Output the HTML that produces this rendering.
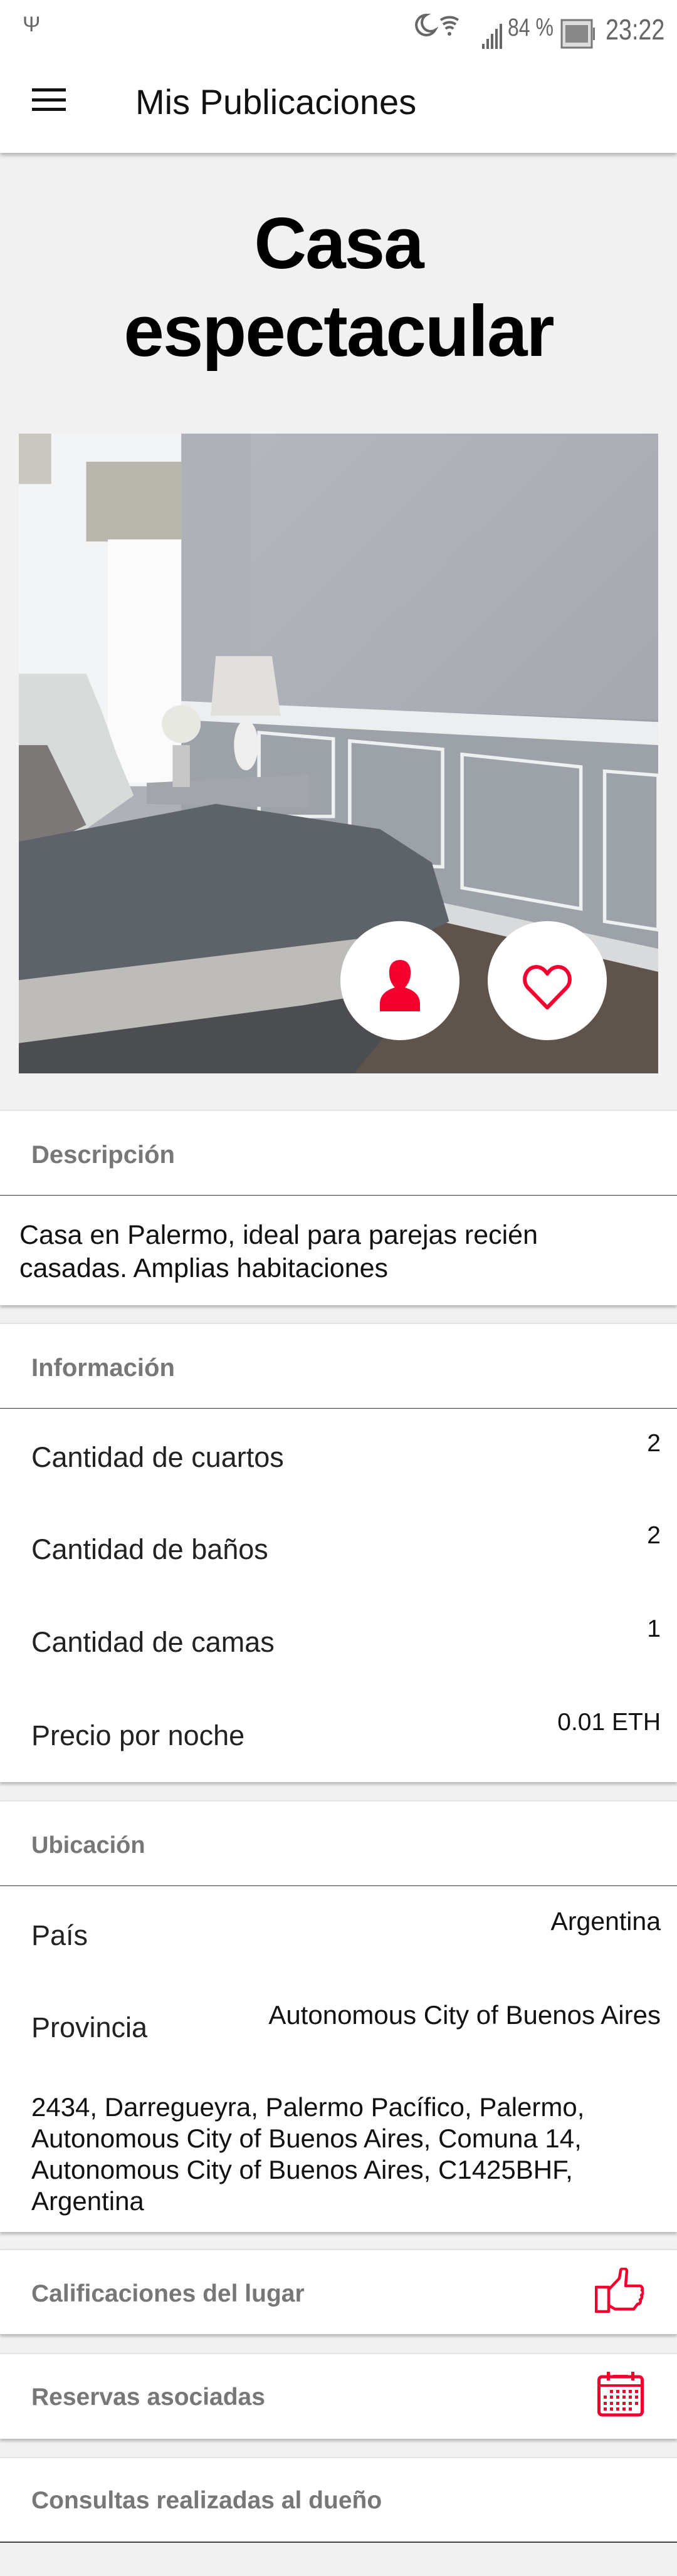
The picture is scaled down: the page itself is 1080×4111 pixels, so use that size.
<!DOCTYPE html>
<html><head><meta charset="utf-8"><style>
*{margin:0;padding:0;box-sizing:border-box}
body{width:1080px;height:4111px;background:#f1f1f1;font-family:"Liberation Sans",sans-serif;position:relative;overflow:hidden}
.a{position:absolute}
.card{position:absolute;left:0;width:1080px;background:#fff;border-top:2px solid #e4e4e4}
.sh{box-shadow:0 4px 4px rgba(0,0,0,.22)}
.hd{position:absolute;left:50px;font-weight:bold;color:#777;font-size:40px;line-height:40px}
.hd2{position:absolute;left:50px;font-weight:bold;color:#777;font-size:39px;line-height:40px}
.line{position:absolute;left:0;width:1080px;height:2px;background:#555}
.lbl{position:absolute;left:50px;font-size:45px;line-height:50px;color:#222}
.val{position:absolute;right:26px;font-size:39px;line-height:44px;color:#111;text-align:right}
</style></head><body>
<div class="a" style="left:0;top:0;width:1080px;height:244px;background:#fff;box-shadow:0 4px 6px rgba(0,0,0,.25)"></div>
<div class="a" style="left:36px;top:20px;font-size:34px;color:#666">&#936;</div>
<svg class="a" style="left:658px;top:18px" width="80" height="42" viewBox="0 0 80 42"><path d="M22 6a16 16 0 1 0 14 24a13 13 0 0 1-14-24z" fill="none" stroke="#666" stroke-width="4"/><path d="M45 14a24 24 0 0 1 28 0M49 21a16 16 0 0 1 20 0M53 28a8 8 0 0 1 12 0" fill="none" stroke="#666" stroke-width="4"/><circle cx="59" cy="36" r="3" fill="#666"/></svg>
<svg class="a" style="left:768px;top:28px" width="40" height="52" viewBox="0 0 40 52"><rect x="1" y="42" width="4" height="8" fill="#666"/><rect x="8" y="34" width="4" height="16" fill="#666"/><rect x="15" y="26" width="4" height="24" fill="#666"/><rect x="22" y="18" width="4" height="32" fill="#666"/><rect x="29" y="10" width="4" height="40" fill="#666"/></svg>
<div class="a" style="left:810px;top:22px;font-size:40px;color:#666;transform:scaleX(.8);transform-origin:left">84 %</div>
<svg class="a" style="left:894px;top:30px" width="56" height="50" viewBox="0 0 56 50"><rect x="2" y="2" width="48" height="44" fill="#ddd" stroke="#777" stroke-width="3"/><rect x="8" y="10" width="36" height="28" fill="#888"/><rect x="52" y="14" width="3" height="20" fill="#777"/></svg>
<div class="a" style="left:966px;top:20px;font-size:46px;color:#666;transform:scaleX(.82);transform-origin:left">23:22</div>
<div class="a" style="left:51px;top:141px;width:54px;height:5px;background:#111"></div>
<div class="a" style="left:51px;top:157px;width:54px;height:5px;background:#111"></div>
<div class="a" style="left:51px;top:172px;width:54px;height:5px;background:#111"></div>
<div class="a" style="left:216px;top:132px;font-size:56px;line-height:62px;color:#111;font-weight:500">Mis Publicaciones</div>
<div class="a" style="left:0;top:318px;width:1080px;text-align:center;font-weight:bold;font-size:116px;line-height:140px;letter-spacing:-2px;color:#000">Casa<br>espectacular</div>
<svg class="a" style="left:30px;top:692px" width="1020" height="1021" viewBox="44 18 1480 1524" preserveAspectRatio="none">
<defs><linearGradient id="w" x1="0" y1="0" x2="1" y2="1"><stop offset="0" stop-color="#b8bcc1"/><stop offset="1" stop-color="#9ea2a9"/></linearGradient></defs>
<rect x="44" y="18" width="1480" height="1524" fill="url(#w)"/>
<rect x="420" y="18" width="160" height="680" fill="#aeb2b8"/>
<polygon points="420,660 1524,700 1524,1542 420,1542" fill="#9da1a8"/>
<polygon points="420,655 1524,705 1524,760 420,700" fill="#eceef0"/>
<g fill="none" stroke="#eef0f2" stroke-width="8"><polygon points="600,730 772,745 772,930 600,930"/><polygon points="810,750 1025,770 1025,1050 810,1040"/><polygon points="1070,782 1345,812 1345,1150 1070,1100"/><polygon points="1400,822 1524,832 1524,1200 1400,1180"/></g>
<polygon points="1000,1130 1524,1245 1524,1310 1000,1190" fill="#d9dadc"/>
<polygon points="1000,1175 1524,1300 1524,1542 700,1542" fill="#5f544c"/>
<rect x="44" y="18" width="376" height="840" fill="#f3f4f5"/>
<rect x="44" y="18" width="75" height="120" fill="#c9c7c0"/>
<rect x="200" y="85" width="220" height="190" fill="#b9b6ad"/>
<rect x="250" y="270" width="170" height="580" fill="#fbfbfb"/>
<polygon points="340,850 715,830 715,910 340,900" fill="#a2a6ab"/>
<polygon points="500,548 630,548 650,690 488,690" fill="#e2e0dc"/>
<ellipse cx="570" cy="760" rx="28" ry="60" fill="#eeeeee"/>
<circle cx="420" cy="710" r="45" fill="#e8e8e2"/>
<rect x="400" y="760" width="40" height="100" fill="#c7c7c7"/>
<polygon points="44,590 200,590 240,690 270,780 310,880 200,960 44,990" fill="#d7dbd9"/>
<polygon points="44,760 110,760 200,950 120,990 44,990" fill="#7c7878"/>
<polygon points="44,990 500,900 880,960 1000,1040 1040,1180 1000,1200 44,1320" fill="#5d6369"/>
<polygon points="44,1320 1000,1200 990,1330 800,1542 44,1542" fill="#bdbcb8"/>
<polygon points="44,1470 700,1380 990,1330 820,1542 44,1542" fill="#4b4d50"/>
</svg>
<div class="a" style="left:543px;top:1470px;width:190px;height:190px;border-radius:50%;background:#fff"></div>
<div class="a" style="left:778px;top:1470px;width:190px;height:190px;border-radius:50%;background:#fff"></div>
<svg class="a" style="left:603px;top:1530px" width="70" height="86" viewBox="0 0 70 86"><path d="M35 2c12 0 18 9 17 22c0 10-5 18-9 22c14 4 24 12 24 26v12H3V72c0-14 10-22 24-26c-4-4-9-12-9-22C17 11 23 2 35 2z" fill="#f5002e"/></svg>
<svg class="a" style="left:834px;top:1538px" width="78" height="74" viewBox="0 0 78 74"><path d="M39 70L8 38C-2 27 4 6 21 5c9 0 14 5 18 11c4-6 9-11 18-11c17 1 23 22 13 33z" fill="none" stroke="#f5002e" stroke-width="6" stroke-linejoin="round"/></svg>
<div class="card sh" style="top:1771px;height:312px"></div>
<div class="hd" style="top:1823px">Descripción</div>
<div class="line" style="top:1907px;height:1px;background:#333"></div>
<div class="a" style="left:31px;top:1945px;font-size:43px;line-height:53px;color:#111">Casa en Palermo, ideal para parejas recién<br>casadas. Amplias habitaciones</div>
<div class="card sh" style="top:2111px;height:733px"></div>
<div class="hd" style="top:2163px">Información</div>
<div class="line" style="top:2247px;height:1px;background:#333"></div>
<div class="lbl" style="top:2301px">Cantidad de cuartos</div><div class="val" style="top:2282px">2</div>
<div class="lbl" style="top:2448px">Cantidad de baños</div><div class="val" style="top:2429px">2</div>
<div class="lbl" style="top:2596px">Cantidad de camas</div><div class="val" style="top:2578px">1</div>
<div class="lbl" style="top:2745px">Precio por noche</div><div class="val" style="top:2727px">0.01 ETH</div>
<div class="card sh" style="top:2873px;height:689px"></div>
<div class="hd" style="top:2925px;font-size:38px">Ubicación</div>
<div class="line" style="top:3009px;height:1px;background:#333"></div>
<div class="lbl" style="top:3064px">País</div><div class="val" style="top:3044px;font-size:41px">Argentina</div>
<div class="lbl" style="top:3211px">Provincia</div><div class="val" style="top:3194px;font-size:42px">Autonomous City of Buenos Aires</div>
<div class="a" style="left:50px;top:3338px;font-size:42px;line-height:50px;color:#111">2434, Darregueyra, Palermo Pacífico, Palermo,<br>Autonomous City of Buenos Aires, Comuna 14,<br>Autonomous City of Buenos Aires, C1425BHF,<br>Argentina</div>
<div class="card sh" style="top:3589px;height:136px"></div>
<div class="hd2" style="top:3641px">Calificaciones del lugar</div>
<svg class="a" style="left:949px;top:3619px" width="78" height="72" viewBox="0 0 78 72"><path d="M2 31h20v39H2zM22 35l17-18l2-12c0-5 9-5 10 0l-2 24h22c4 0 6 4 4 7c3 2 2 6-1 8c2 2 1 6-2 7c2 3 0 7-4 7l-6 8H32l-10-6" fill="none" stroke="#f5002e" stroke-width="4.5" stroke-linejoin="round"/></svg>
<div class="card sh" style="top:3755px;height:137px"></div>
<div class="hd2" style="top:3806px">Reservas asociadas</div>
<svg class="a" style="left:953px;top:3785px" width="74" height="72" viewBox="0 0 74 72"><rect x="2.5" y="8" width="69" height="61" rx="5" fill="none" stroke="#f5002e" stroke-width="5"/><rect x="2" y="20" width="70" height="4" fill="#f5002e"/><rect x="15" y="0" width="5" height="14" fill="#f5002e"/><rect x="54" y="0" width="5" height="14" fill="#f5002e"/><rect x="25" y="5" width="24" height="4" fill="#f5002e"/><g fill="#f5002e"><rect x="20" y="29" width="5" height="5"/><rect x="30" y="29" width="5" height="5"/><rect x="40" y="29" width="5" height="5"/><rect x="50" y="29" width="5" height="5"/><rect x="60" y="29" width="5" height="5"/><rect x="10" y="38" width="5" height="5"/><rect x="20" y="38" width="5" height="5"/><rect x="30" y="38" width="5" height="5"/><rect x="40" y="38" width="5" height="5"/><rect x="50" y="38" width="5" height="5"/><rect x="60" y="38" width="5" height="5"/><rect x="10" y="48" width="5" height="5"/><rect x="20" y="48" width="5" height="5"/><rect x="30" y="48" width="5" height="5"/><rect x="40" y="48" width="5" height="5"/><rect x="50" y="48" width="5" height="5"/><rect x="60" y="48" width="5" height="5"/><rect x="10" y="57" width="5" height="5"/><rect x="20" y="57" width="5" height="5"/><rect x="30" y="57" width="5" height="5"/><rect x="40" y="57" width="5" height="5"/><rect x="50" y="57" width="5" height="5"/></g></svg>
<div class="card" style="top:3921px;height:137px;border-bottom:2px solid #444"></div>
<div class="hd2" style="top:3971px">Consultas realizadas al dueño</div>
</body></html>
